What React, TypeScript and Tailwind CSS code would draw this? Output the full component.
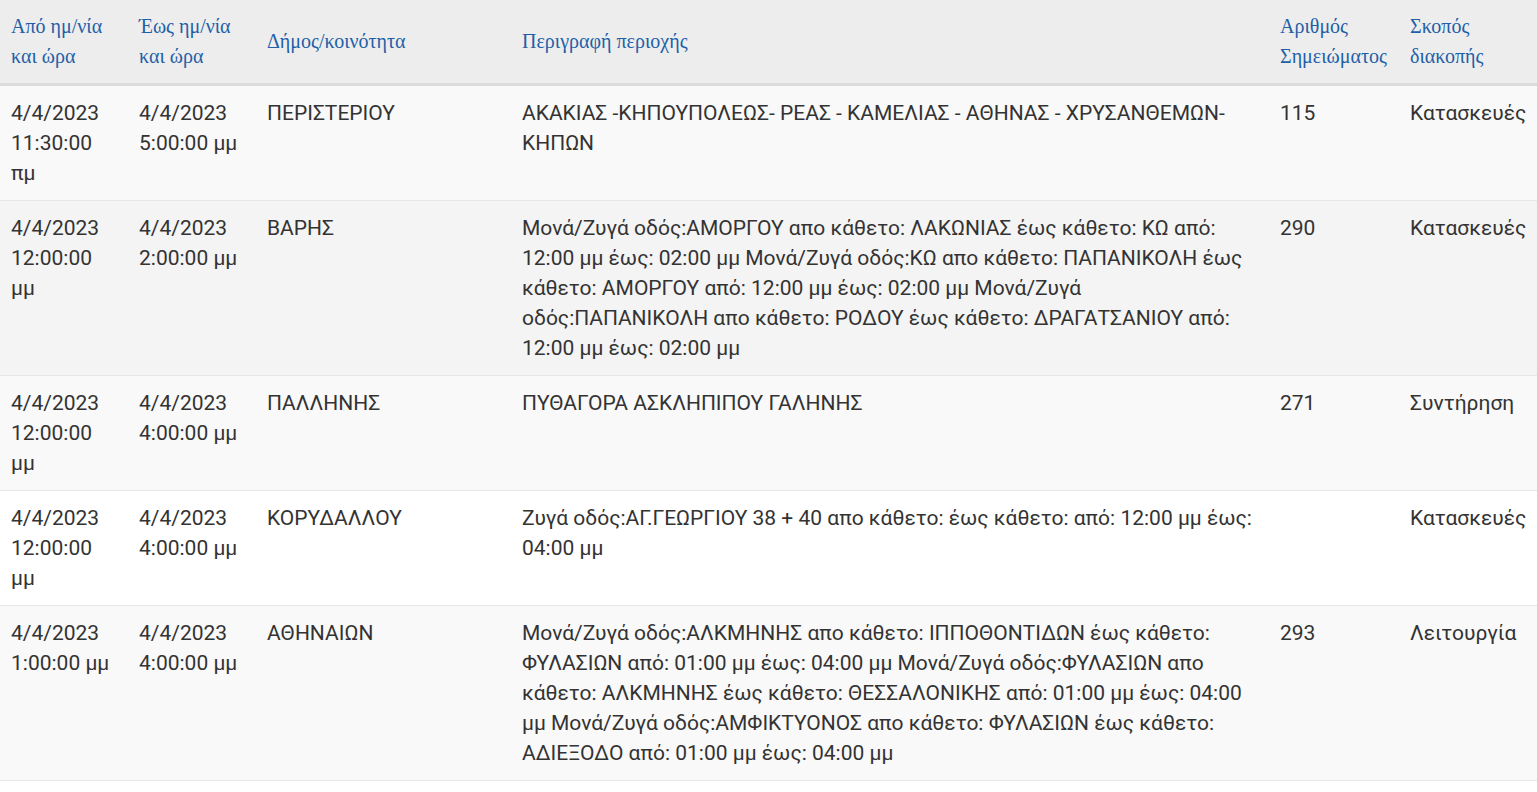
import React from "react";

type Row = { from: string; to: string; dimos: string; desc: string; num: string; purpose: string; bg: string };

const rows: Row[] = [
  {
    from: "4/4/2023 11:30:00 πμ",
    to: "4/4/2023 5:00:00 μμ",
    dimos: "ΠΕΡΙΣΤΕΡΙΟΥ",
    desc: "ΑΚΑΚΙΑΣ -ΚΗΠΟΥΠΟΛΕΩΣ- ΡΕΑΣ - ΚΑΜΕΛΙΑΣ - ΑΘΗΝΑΣ - ΧΡΥΣΑΝΘΕΜΩΝ- ΚΗΠΩΝ",
    num: "115",
    purpose: "Κατασκευές",
    bg: "bg-[#f9f9f9]",
  },
  {
    from: "4/4/2023 12:00:00 μμ",
    to: "4/4/2023 2:00:00 μμ",
    dimos: "ΒΑΡΗΣ",
    desc:
      "Μονά/Ζυγά οδός:ΑΜΟΡΓΟΥ απο κάθετο: ΛΑΚΩΝΙΑΣ έως κάθετο: ΚΩ από: 12:00 μμ έως: 02:00 μμ Μονά/Ζυγά οδός:ΚΩ απο κάθετο: ΠΑΠΑΝΙΚΟΛΗ έως κάθετο: ΑΜΟΡΓΟΥ από: 12:00 μμ έως: 02:00 μμ Μονά/Ζυγά οδός:ΠΑΠΑΝΙΚΟΛΗ απο κάθετο: ΡΟΔΟΥ έως κάθετο: ΔΡΑΓΑΤΣΑΝΙΟΥ από: 12:00 μμ έως: 02:00 μμ",
    num: "290",
    purpose: "Κατασκευές",
    bg: "bg-[#f4f4f4]",
  },
  {
    from: "4/4/2023 12:00:00 μμ",
    to: "4/4/2023 4:00:00 μμ",
    dimos: "ΠΑΛΛΗΝΗΣ",
    desc: "ΠΥΘΑΓΟΡΑ ΑΣΚΛΗΠΙΠΟΥ ΓΑΛΗΝΗΣ",
    num: "271",
    purpose: "Συντήρηση",
    bg: "bg-[#f9f9f9]",
  },
  {
    from: "4/4/2023 12:00:00 μμ",
    to: "4/4/2023 4:00:00 μμ",
    dimos: "ΚΟΡΥΔΑΛΛΟΥ",
    desc: "Ζυγά οδός:ΑΓ.ΓΕΩΡΓΙΟΥ 38 + 40 απο κάθετο: έως κάθετο: από: 12:00 μμ έως: 04:00 μμ",
    num: "",
    purpose: "Κατασκευές",
    bg: "bg-white",
  },
  {
    from: "4/4/2023 1:00:00 μμ",
    to: "4/4/2023 4:00:00 μμ",
    dimos: "ΑΘΗΝΑΙΩΝ",
    desc:
      "Μονά/Ζυγά οδός:ΑΛΚΜΗΝΗΣ απο κάθετο: ΙΠΠΟΘΟΝΤΙΔΩΝ έως κάθετο: ΦΥΛΑΣΙΩΝ από: 01:00 μμ έως: 04:00 μμ Μονά/Ζυγά οδός:ΦΥΛΑΣΙΩΝ απο κάθετο: ΑΛΚΜΗΝΗΣ έως κάθετο: ΘΕΣΣΑΛΟΝΙΚΗΣ από: 01:00 μμ έως: 04:00 μμ Μονά/Ζυγά οδός:ΑΜΦΙΚΤΥΟΝΟΣ απο κάθετο: ΦΥΛΑΣΙΩΝ έως κάθετο: ΑΔΙΕΞΟΔΟ από: 01:00 μμ έως: 04:00 μμ",
    num: "293",
    purpose: "Λειτουργία",
    bg: "bg-[#f9f9f9]",
  },
];

const headers = [
  "Από ημ/νία και ώρα",
  "Έως ημ/νία και ώρα",
  "Δήμος/κοινότητα",
  "Περιγραφή περιοχής",
  "Αριθμός Σημειώματος",
  "Σκοπός διακοπής",
];

export default function App() {
  return (
    <div className="w-[1537px] min-h-[792px] bg-white">
      <table className="w-[1537px] table-fixed border-collapse">
        <colgroup>
          <col className="w-[128px]" />
          <col className="w-[128px]" />
          <col className="w-[255px]" />
          <col className="w-[758px]" />
          <col className="w-[130px]" />
          <col className="w-[138px]" />
        </colgroup>
        <thead>
          <tr className="bg-[#ededed] border-b-[3px] border-[#dcdcdc]">
            {headers.map((h) => (
              <th
                key={h}
                className="pl-[11px] pr-[10px] pt-[11px] pb-[12px] text-left align-middle font-normal text-[20px] leading-[30px] text-[#1f5fa8] [font-family:'Liberation_Serif','Times_New_Roman',serif]"
              >
                {h}
              </th>
            ))}
          </tr>
        </thead>
        <tbody className="[font-family:Roboto,'Liberation_Sans',sans-serif] text-[21px] leading-[30px] text-[#333333]">
          {rows.map((r, i) => (
            <tr key={i} className={`${r.bg} border-t border-[#e6e6e6] ${i === rows.length - 1 ? "border-b" : ""}`}>
              <td className="pl-[11px] pr-[10px] py-3 align-top">{r.from}</td>
              <td className="pl-[11px] pr-[10px] py-3 align-top">{r.to}</td>
              <td className="pl-[11px] pr-[10px] py-3 align-top">{r.dimos}</td>
              <td className="pl-[11px] pr-[10px] py-3 align-top">{r.desc}</td>
              <td className="pl-[11px] pr-[10px] py-3 align-top">{r.num}</td>
              <td className="pl-[11px] pr-[10px] py-3 align-top">{r.purpose}</td>
            </tr>
          ))}
        </tbody>
      </table>
    </div>
  );
}
